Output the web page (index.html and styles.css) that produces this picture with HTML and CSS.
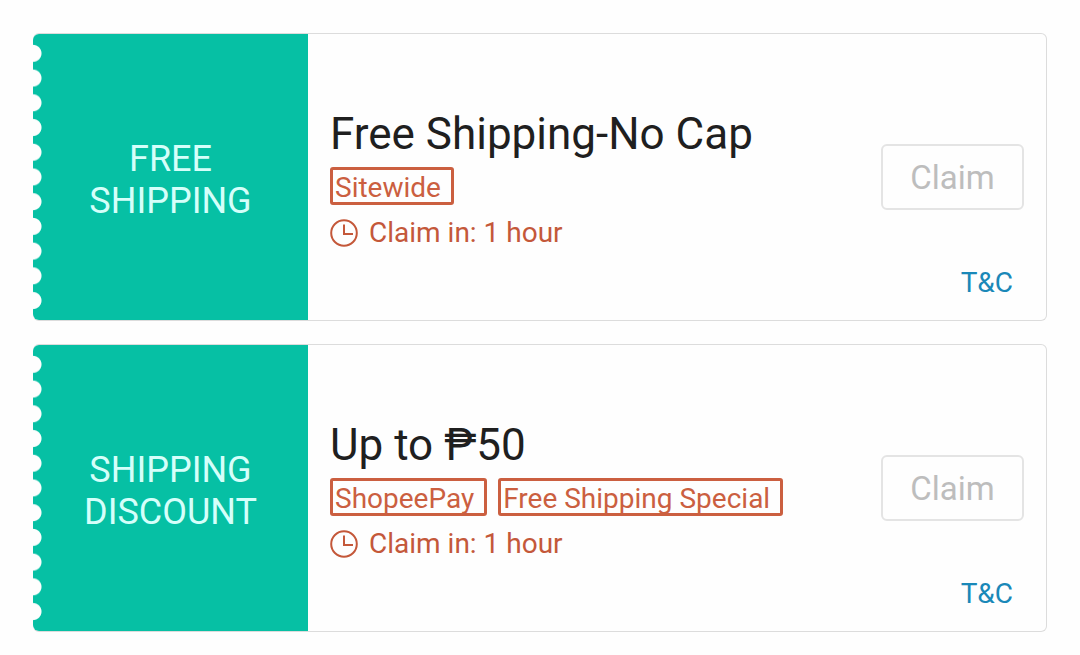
FILE: index.html
```html
<!DOCTYPE html>
<html lang="en">
<head>
    <meta charset="UTF-8">
    <meta name="viewport" content="width=device-width, initial-scale=1.0">
    <title>Shipping Vouchers</title>
    <link rel="stylesheet" href="styles.css">
</head>
<body>
    <main class="vouchers">
        <!-- Free shipping voucher -->
        <article class="voucher">
            <div class="voucher-type">FREE<br>SHIPPING</div>
            <div class="voucher-info">
                <h2>Free Shipping-No Cap</h2>
                <div class="tags">
                    <span class="tag">Sitewide</span>
                </div>
                <p class="claim-time">
                    <svg class="clock" viewBox="0 0 28 28" aria-hidden="true">
                        <circle cx="14" cy="14" r="12.8"/>
                        <path d="M14 5.5v9.5h9"/>
                    </svg>
                    Claim in: 1 hour
                </p>
            </div>
            <div class="voucher-action">
                <button type="button" class="claim-btn" disabled>Claim</button>
                <a href="#" class="terms">T&amp;C</a>
            </div>
        </article>

        <!-- Shipping discount voucher -->
        <article class="voucher">
            <div class="voucher-type">SHIPPING<br>DISCOUNT</div>
            <div class="voucher-info">
                <h2>Up to ₱50</h2>
                <div class="tags">
                    <span class="tag">ShopeePay</span>
                    <span class="tag">Free Shipping Special</span>
                </div>
                <p class="claim-time">
                    <svg class="clock" viewBox="0 0 28 28" aria-hidden="true">
                        <circle cx="14" cy="14" r="12.8"/>
                        <path d="M14 5.5v9.5h9"/>
                    </svg>
                    Claim in: 1 hour
                </p>
            </div>
            <div class="voucher-action">
                <button type="button" class="claim-btn" disabled>Claim</button>
                <a href="#" class="terms">T&amp;C</a>
            </div>
        </article>
    </main>
</body>
</html>
```
FILE: styles.css
```css
* {
    box-sizing: border-box;
}

body {
    font-family: Roboto, "Noto Sans", sans-serif;
    background-color: #fefefe;
    margin: 0;
}

.vouchers {
    display: flex;
    flex-direction: column;
    gap: 23px;
    padding: 33px 33px 22px;
}

.voucher {
    display: grid;
    grid-template-columns: 275px 1fr auto;
    min-height: 288px;
    background-color: #fefefe;
    border: 1px solid #dcdcdc;
    border-left: none;
    border-radius: 6px;
}

.voucher-type {
    position: relative;
    display: flex;
    align-items: center;
    justify-content: center;
    padding-top: 6px;
    background-color: #06c0a4;
    border-radius: 6px 0 0 6px;
    color: #d5fffa;
    font-size: 36px;
    line-height: 42px;
    text-align: center;
}

/* Perforated ticket edge */
.voucher-type::before {
    content: "";
    position: absolute;
    top: 7px;
    bottom: 7px;
    left: 0;
    width: 9px;
    background: radial-gradient(circle at 0 50%, #fefefe 8px, transparent 9px);
    background-size: 9px 25px;
    background-repeat: no-repeat round;
}

.voucher-info {
    display: flex;
    flex-direction: column;
    justify-content: center;
    padding-top: 2px;
    padding-left: 22px;
}

h2 {
    margin: 0 0 7px;
    color: #1f1f1f;
    font-size: 44px;
    font-weight: 400;
    line-height: 52px;
}

.tags {
    display: flex;
    gap: 11px;
}

.tag {
    height: 38px;
    padding: 0 10px 0 2px;
    border: 3px solid #cb5f40;
    border-radius: 3px;
    color: #cb5f40;
    font-size: 28px;
    line-height: 36px;
}

.claim-time {
    display: flex;
    align-items: center;
    gap: 11px;
    margin: 12px 0 0;
    color: #c4583a;
    font-size: 28px;
    line-height: 32px;
}

.clock {
    width: 28px;
    height: 28px;
    fill: none;
    stroke: #c4583a;
    stroke-width: 2;
}

.voucher-action {
    display: grid;
    grid-template-rows: 1fr auto 1fr;
    justify-items: end;
    padding-right: 22px;
}

.claim-btn {
    grid-row: 2;
    width: 143px;
    height: 66px;
    padding: 0;
    background: none;
    border: 2px solid #e4e4e4;
    border-radius: 6px;
    color: #bdbdbd;
    font-family: inherit;
    font-size: 33px;
}

.terms {
    grid-row: 3;
    align-self: end;
    margin: 0 11px 21px 0;
    color: #1a88b8;
    font-size: 28px;
    line-height: 32px;
    text-decoration: none;
}
```
